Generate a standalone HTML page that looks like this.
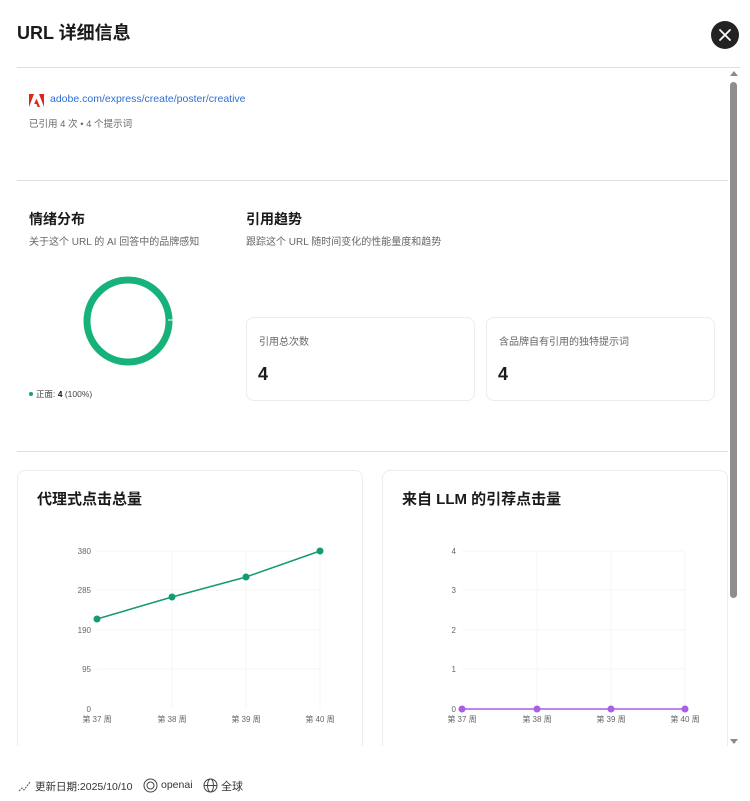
<!DOCTYPE html>
<html><head><meta charset="utf-8"><style>
*{margin:0;padding:0;box-sizing:border-box}
body{width:750px;height:801px;background:#fff;font-family:"Liberation Sans","Noto Sans CJK SC",sans-serif;color:#1a1a1a;position:relative;overflow:hidden}
.a{position:absolute;white-space:nowrap}
.hr{position:absolute;height:1px;background:#dedede}
.card{position:absolute;border:1px solid #ececec;border-radius:8px;background:#fff}
</style></head><body>
<div class="a" style="left:17px;top:19px;font-size:18px;font-weight:bold">URL 详细信息</div>
<div class="a" style="left:711px;top:21px;width:28px;height:28px;border-radius:50%;background:#222"></div>
<svg class="a" style="left:711px;top:21px" width="28" height="28"><path d="M9 9L19 19M19 9L9 19" stroke="#fff" stroke-width="1.8" stroke-linecap="round"/></svg>
<div class="hr" style="left:17px;top:67px;width:723px"></div>

<svg class="a" style="left:29px;top:94px" width="15" height="13"><path d="M5 0H0V13Z M10 0H15V13Z M7.5 4.5L11 13H8.6L7.5 10H5.2Z" fill="#e1251b"/></svg>
<div class="a" style="left:50px;top:93px;font-size:10.5px;color:#2d6fd6">adobe.com/express/create/poster/creative</div>
<div class="a" style="left:29px;top:116px;font-size:9.5px;color:#666">已引用 4 次 • 4 个提示词</div>
<div class="hr" style="left:17px;top:180px;width:711px"></div>

<div class="a" style="left:29px;top:209px;font-size:14px;font-weight:bold">情绪分布</div>
<div class="a" style="left:29px;top:233px;font-size:10px;color:#666">关于这个 URL 的 AI 回答中的品牌感知</div>
<svg class="a" style="left:80px;top:273px" width="96" height="96"><circle cx="48" cy="48" r="41" fill="none" stroke="#17b27a" stroke-width="7"/><line x1="88" y1="47" x2="94" y2="47" stroke="#fff" stroke-width="1"/></svg>
<div class="a" style="left:29px;top:392px;width:4px;height:4px;border-radius:50%;background:#17a070"></div>
<div class="a" style="left:36px;top:388px;font-size:8.5px;color:#444">正面: <b style="color:#111">4</b> (100%)</div>

<div class="a" style="left:246px;top:209px;font-size:14px;font-weight:bold">引用趋势</div>
<div class="a" style="left:246px;top:233px;font-size:10px;color:#666">跟踪这个 URL 随时间变化的性能量度和趋势</div>
<div class="card" style="left:246px;top:317px;width:229px;height:84px"></div>
<div class="a" style="left:259px;top:333px;font-size:10px;color:#666">引用总次数</div>
<div class="a" style="left:258px;top:364px;font-size:18px;font-weight:bold">4</div>
<div class="card" style="left:486px;top:317px;width:229px;height:84px"></div>
<div class="a" style="left:499px;top:333px;font-size:10px;color:#666">含品牌自有引用的独特提示词</div>
<div class="a" style="left:498px;top:364px;font-size:18px;font-weight:bold">4</div>
<div class="hr" style="left:17px;top:451px;width:711px"></div>

<div class="card" style="left:17px;top:470px;width:346px;height:310px"></div>
<div class="card" style="left:382px;top:470px;width:346px;height:310px"></div>
<div class="a" style="left:37px;top:488px;font-size:15px;font-weight:bold">代理式点击总量</div>
<div class="a" style="left:402px;top:488px;font-size:15px;font-weight:bold">来自 LLM 的引荐点击量</div>

<svg class="a" style="left:0;top:530px" width="750" height="210" font-family="Liberation Sans,Noto Sans CJK SC,sans-serif" font-size="8" fill="#666">
<g stroke="#f5f5f5" stroke-width="1">
<line x1="97" y1="21" x2="320" y2="21"/><line x1="97" y1="60" x2="320" y2="60"/><line x1="97" y1="100" x2="320" y2="100"/><line x1="97" y1="139" x2="320" y2="139"/>
<line x1="172" y1="21" x2="172" y2="179"/><line x1="246" y1="21" x2="246" y2="179"/><line x1="320" y1="21" x2="320" y2="179"/>
<line x1="462" y1="21" x2="685" y2="21"/><line x1="462" y1="60" x2="685" y2="60"/><line x1="462" y1="100" x2="685" y2="100"/><line x1="462" y1="139" x2="685" y2="139"/>
<line x1="537" y1="21" x2="537" y2="179"/><line x1="611" y1="21" x2="611" y2="179"/><line x1="685" y1="21" x2="685" y2="179"/>
</g>
<g text-anchor="end"><text x="91" y="24">380</text><text x="91" y="63">285</text><text x="91" y="103">190</text><text x="91" y="142">95</text><text x="91" y="182">0</text>
<text x="456" y="24">4</text><text x="456" y="63">3</text><text x="456" y="103">2</text><text x="456" y="142">1</text><text x="456" y="182">0</text></g>
<g text-anchor="middle"><text x="97" y="192">第 37 周</text><text x="172" y="192">第 38 周</text><text x="246" y="192">第 39 周</text><text x="320" y="192">第 40 周</text>
<text x="462" y="192">第 37 周</text><text x="537" y="192">第 38 周</text><text x="611" y="192">第 39 周</text><text x="685" y="192">第 40 周</text></g>
<polyline points="97,89 172,67 246,47 320,21" fill="none" stroke="#149a74" stroke-width="1.5"/>
<g fill="#149a74"><circle cx="97" cy="89" r="3.5"/><circle cx="172" cy="67" r="3.5"/><circle cx="246" cy="47" r="3.5"/><circle cx="320" cy="21" r="3.5"/></g>
<line x1="462" y1="179" x2="685" y2="179" stroke="#a95ee6" stroke-width="1.5"/>
<g fill="#a95ee6"><circle cx="462" cy="179" r="3.5"/><circle cx="537" cy="179" r="3.5"/><circle cx="611" cy="179" r="3.5"/><circle cx="685" cy="179" r="3.5"/></g>
</svg>
<div class="a" style="left:0;top:746px;width:750px;height:55px;background:#fff"></div>

<svg class="a" style="left:729px;top:70px" width="10" height="8"><path d="M1 6L5 1L9 6Z" fill="#8a8a8a"/></svg>
<div class="a" style="left:730px;top:82px;width:7px;height:516px;border-radius:4px;background:#8e8e8e"></div>
<svg class="a" style="left:729px;top:738px" width="10" height="8"><path d="M1 1L9 1L5 6Z" fill="#8a8a8a"/></svg>

<svg class="a" style="left:18px;top:779px" width="14" height="14"><path d="M1 12L4 9L6 11L12 3" fill="none" stroke="#555" stroke-width="1" stroke-dasharray="2 1"/></svg>
<div class="a" style="left:35px;top:779px;font-size:10.5px;color:#333">更新日期:2025/10/10</div>
<svg class="a" style="left:143px;top:778px" width="15" height="15"><circle cx="7.5" cy="7.5" r="6.5" fill="none" stroke="#444" stroke-width="1"/><circle cx="7.5" cy="7.5" r="3.5" fill="none" stroke="#444" stroke-width="1"/></svg>
<div class="a" style="left:161px;top:779px;font-size:10.5px;color:#333">openai</div>
<svg class="a" style="left:203px;top:778px" width="15" height="15"><g fill="none" stroke="#444" stroke-width="1"><circle cx="7.5" cy="7.5" r="6.5"/><ellipse cx="7.5" cy="7.5" rx="3" ry="6.5"/><line x1="1" y1="7.5" x2="14" y2="7.5"/></g></svg>
<div class="a" style="left:221px;top:778px;font-size:11px;color:#333">全球</div>
</body></html>
